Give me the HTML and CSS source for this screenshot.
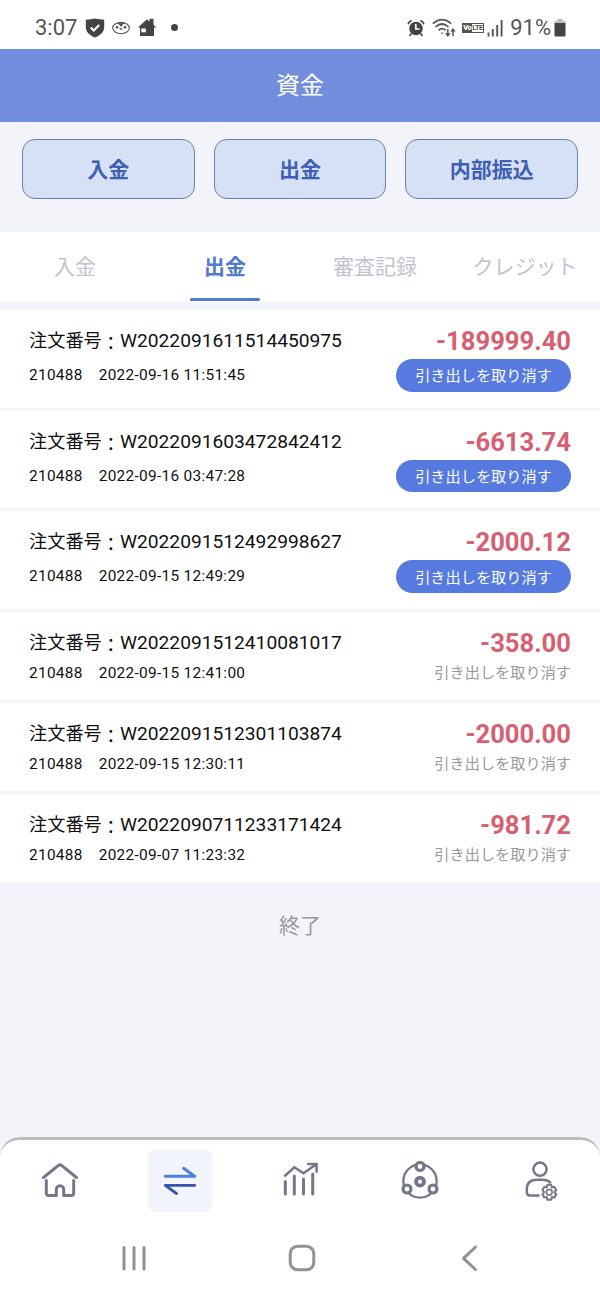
FILE: index.html
```html
<!DOCTYPE html>
<html lang="ja">
<head>
    <meta charset="UTF-8">
    <meta name="viewport" content="width=device-width, initial-scale=1.0">
    <title>資金</title>
    <link rel="stylesheet" href="styles.css">
</head>
<body>
<div class="app">
    <div class="status-bar">
        <div class="status-left">
            <span>3:07</span>
            <svg class="ic-shield" width="20" height="20" viewBox="0 0 20 20"><path d="M10 .5C7 1.2 4 1.6.8 1.7V9c0 5 4 8.500 9.200 10.500C15.200 17.500 19.200 14 19.200 9V1.700C16 1.600 13 1.200 10 .5z" fill="#444"/><path d="M5.800 9.500l3 3L14.200 7" fill="none" stroke="#fff" stroke-width="2.200"/></svg>
            <svg class="ic-face" width="18" height="14" viewBox="0 0 18 14"><ellipse cx="9" cy="7" rx="8.300" ry="5.700" fill="#fff" stroke="#555" stroke-width="1.100"/><path d="M4.500 2.300Q9 .6 13.500 2.300Q11 2.500 9.800 5L9 6 8.200 5Q7 2.500 4.500 2.300z" fill="#555"/><circle cx="5" cy="6.300" r="1.200" fill="#444"/><circle cx="13" cy="6.300" r="1.200" fill="#444"/><path d="M7 7.200h4L9 9.300z" fill="#555"/></svg>
            <svg class="ic-house" width="20" height="19" viewBox="0 0 20 19"><path d="M.8 9.600L10 1.200l2.500 2.200V.7h4v6l2.700 2.900H17V18H3V9.600z" fill="#444"/><path d="M4.300 10.500h4.500v3.800H4.300z" fill="#fff"/></svg>
            <span class="dot"></span>
        </div>
        <div class="status-right">
            <svg width="18" height="18" viewBox="0 0 18 18"><circle cx="9" cy="9.500" r="6.800" fill="#444"/><path d="M1 5.200Q2 2.500 4.700 1.500M17 5.200Q16 2.500 13.300 1.500M4.500 14.500l-2 2.500M13.500 14.500l2 2.500" fill="none" stroke="#444" stroke-width="1.600"/><path d="M8.800 5v5h3.700" fill="none" stroke="#fff" stroke-width="1.700"/></svg>
            <svg class="ic-wifi" width="25" height="20" viewBox="0 0 25 20"><g fill="none" stroke="#555" stroke-width="1.700"><path d="M.8 5.600Q10 -2.500 19.200 5.600M3.500 9Q10 3 16.500 9M6.500 12.300Q10 9 13.500 12.300"/><path d="M15.800 11v6M21 18v-6" stroke-width="1.500"/></g><path d="M8.800 14.500h2.600l-1.300 1.700zM12.900 15.300h5.800l-2.900 3.700zM18.200 13.500h5.600L21 10z" fill="#555"/></svg>
            <span class="volte"><b>Vo</b><span>LTE</span></span>
            <svg class="ic-signal" width="17" height="18" viewBox="0 0 17 18"><path d="M1.500 13.500v4M5.800 10v7.500M10.200 6v11.500M14.600 1v16.500" stroke="#555" stroke-width="1.900"/></svg>
            <span>91%</span>
            <svg class="ic-battery" width="12" height="18" viewBox="0 0 12 18"><path d="M3.500 0h5v2h3v3H.5V2h3z" fill="#bbb"/><path d="M.5 4h11v12.500q0 1-1 1h-9q-1 0-1-1z" fill="#444"/></svg>
        </div>
    </div>

    <h1 class="header">資金</h1>

    <div class="actions">
        <button class="action">入金</button>
        <button class="action">出金</button>
        <button class="action">内部振込</button>
    </div>

    <div class="tabs">
        <div class="tab">入金</div>
        <div class="tab active">出金</div>
        <div class="tab">審査記録</div>
        <div class="tab">クレジット</div>
    </div>

    <div class="list">
        <div class="row pending">
            <div class="info">
                <div class="order"><span class="label">注文番号<span class="colon">：</span></span>W2022091611514450975</div>
                <div class="meta"><span>210488</span><span>2022-09-16 11:51:45</span></div>
            </div>
            <div class="side"><div class="amount">-189999.40</div><button class="cancel">引き出しを取り消す</button></div>
        </div>
        <div class="row pending">
            <div class="info">
                <div class="order"><span class="label">注文番号<span class="colon">：</span></span>W2022091603472842412</div>
                <div class="meta"><span>210488</span><span>2022-09-16 03:47:28</span></div>
            </div>
            <div class="side"><div class="amount">-6613.74</div><button class="cancel">引き出しを取り消す</button></div>
        </div>
        <div class="row pending">
            <div class="info">
                <div class="order"><span class="label">注文番号<span class="colon">：</span></span>W2022091512492998627</div>
                <div class="meta"><span>210488</span><span>2022-09-15 12:49:29</span></div>
            </div>
            <div class="side"><div class="amount">-2000.12</div><button class="cancel">引き出しを取り消す</button></div>
        </div>
        <div class="row">
            <div class="info">
                <div class="order"><span class="label">注文番号<span class="colon">：</span></span>W2022091512410081017</div>
                <div class="meta"><span>210488</span><span>2022-09-15 12:41:00</span></div>
            </div>
            <div class="side"><div class="amount">-358.00</div><div class="cancelled">引き出しを取り消す</div></div>
        </div>
        <div class="row">
            <div class="info">
                <div class="order"><span class="label">注文番号<span class="colon">：</span></span>W2022091512301103874</div>
                <div class="meta"><span>210488</span><span>2022-09-15 12:30:11</span></div>
            </div>
            <div class="side"><div class="amount">-2000.00</div><div class="cancelled">引き出しを取り消す</div></div>
        </div>
        <div class="row">
            <div class="info">
                <div class="order"><span class="label">注文番号<span class="colon">：</span></span>W2022090711233171424</div>
                <div class="meta"><span>210488</span><span>2022-09-07 11:23:32</span></div>
            </div>
            <div class="side"><div class="amount">-981.72</div><div class="cancelled">引き出しを取り消す</div></div>
        </div>
    </div>

    <div class="end">終了</div>

    <div class="bottom">
        <div class="nav">
            <div class="nav-item">
                <svg width="40" height="40" viewBox="0 0 40 40" class="line"><path d="M3.500 16.500L18.500 4.300q1.500-1.200 3 0L36.500 16.500M6.300 19.500v12.500q0 2.500 2.500 2.500h7.500v-6a3.700 3.700 0 0 1 7.400 0v6h7.500q2.500 0 2.500-2.500V19.500" stroke-width="3"/></svg>
            </div>
            <div class="nav-item selected">
                <svg width="40" height="40" viewBox="0 0 40 40" class="line"><path d="M5.300 15.200h29.400L23.600 7.300" stroke="#4d7fe0" stroke-width="2.900"/><path d="M34.700 24.400H5.300L16.500 32.500" stroke="#3a54aa" stroke-width="2.900"/></svg>
            </div>
            <div class="nav-item">
                <svg width="40" height="40" viewBox="0 0 40 40" class="line"><path d="M5.300 20.500v12.500M14.300 15v18M23.500 18v15M32.700 13v20" stroke-width="3"/><path d="M5 14.700l9.300-8.400 9.200 6L36 3.500M28 3.100h8.600v7.600" stroke-width="2.500" stroke-linejoin="miter"/></svg>
            </div>
            <div class="nav-item">
                <svg width="40" height="40" viewBox="0 0 40 40" class="line"><circle cx="20" cy="20" r="16.600" stroke-width="2.300"/><g fill="#fff" stroke-width="3.200"><circle cx="20" cy="5.500" r="4"/><circle cx="7" cy="28" r="4"/><circle cx="33" cy="28" r="4"/><circle cx="20" cy="20.700" r="4" stroke-width="3.800"/></g></svg>
            </div>
            <div class="nav-item">
                <svg width="40" height="42" viewBox="0 0 40 42" class="line"><circle cx="20" cy="9.200" r="6.600" stroke-width="2.500"/><path d="M18.500 35.500H10q-3.200 0-3.200-3.200V29.500Q6.800 19.800 17 19.800h5q5 0 8.200 2.600" stroke-width="2.500"/><path d="M27.400 24.700h3.800l.7 2.800 2.300-.7 2 3.200-1.900 2.200 1.900 2.200-2 3.200-2.300-.7-.7 2.800h-3.800l-.7-2.800-2.300.7-2-3.200 1.900-2.200-1.900-2.200 2-3.200 2.300.7z" stroke-width="2"/><circle cx="29.300" cy="32.200" r="2.800" stroke-width="1.700"/></svg>
            </div>
        </div>
        <div class="system-nav">
            <svg width="28" height="28" viewBox="0 0 28 28"><path d="M4 3.500v21.500M14 3.500v21.500M24 3.500v21.500"/></svg>
            <svg width="28" height="28" viewBox="0 0 28 28"><rect x="2.200" y="2.200" width="23.600" height="23.600" rx="7.500"/></svg>
            <svg width="28" height="28" viewBox="0 0 28 28"><path d="M20.500 3L8.500 14.300 20.500 25.500"/></svg>
        </div>
    </div>
</div>
</body>
</html>
```

FILE: styles.css
```css
* {
    box-sizing: border-box;
}

body {
    margin: 0;
    font-family: Roboto, "Noto Sans CJK JP", sans-serif;
    background: #f3f4f9;
    color: #111;
}

button {
    font-family: inherit;
    padding: 0;
    border: none;
}

svg {
    display: block;
    flex: none;
}

.app {
    display: flex;
    flex-direction: column;
    width: 600px;
    height: 1300px;
}

.status-bar {
    display: flex;
    justify-content: space-between;
    height: 49px;
    padding: 6px 34px 0 35px;
    background: #fff;
    color: #555;
    font-size: 22px;
}

.status-left,
.status-right {
    display: flex;
    align-items: center;
}

.ic-shield { margin-left: 8px; }
.ic-face { margin-left: 7px; }
.ic-house { margin-left: 7px; }

.dot {
    width: 7px;
    height: 7px;
    margin-left: 14px;
    border-radius: 50%;
    background: #444;
}

.ic-wifi { margin-left: 7px; }

.volte {
    display: flex;
    width: 22px;
    height: 10px;
    margin-left: 5px;
    border: 1px solid #555;
    font-size: 7.500px;
    font-weight: 700;
    line-height: 8px;
    letter-spacing: -0.5px;
    white-space: nowrap;
}

.volte b {
    width: 9px;
    background: #555;
    color: #fff;
}

.ic-signal { margin: 0 6px 0 3px; }
.ic-battery { margin-left: 3px; }

.header {
    height: 73px;
    margin: 0;
    padding-top: 1px;
    background: #718ddc;
    color: #fff;
    font-size: 24px;
    font-weight: 400;
    line-height: 73px;
    text-align: center;
}

.actions {
    display: grid;
    grid-template-columns: repeat(3, 1fr);
    gap: 19px;
    height: 110px;
    padding: 17px 22px 33px;
}

.action {
    padding-bottom: 2px;
    border: 1px solid #6880b4;
    border-radius: 13px;
    background: #d7e1f5;
    color: #3f5fb5;
    font-size: 21px;
    font-weight: 700;
}

.tabs {
    display: grid;
    grid-template-columns: repeat(4, 1fr);
    height: 70px;
    margin-bottom: 8px;
    background: #fff;
}

.tab {
    display: flex;
    flex-direction: column;
    align-items: center;
    color: #bfc4d0;
    font-size: 21px;
    line-height: 70px;
    white-space: nowrap;
}

.tab.active {
    color: #5179cd;
    font-weight: 700;
}

.tab.active::after {
    content: "";
    width: 70px;
    height: 3px;
    margin-top: -4px;
    border-radius: 2px;
    background: #5179cd;
}

.list {
    display: flex;
    flex-direction: column;
    gap: 3px;
}

.row {
    display: flex;
    justify-content: space-between;
    height: 88px;
    padding: 18px 29px 0;
    background: #fff;
}

.row.pending {
    height: 97.700px;
}

.order {
    display: flex;
    font-size: 19.200px;
    line-height: 26px;
}

.label {
    font-size: 18.200px;
}

/* the full-width colon sits too high next to the digits */
.colon {
    display: inline-block;
    transform: translateY(3px);
}

.meta {
    display: flex;
    gap: 16px;
    margin-top: 6px;
    font-size: 15.400px;
    letter-spacing: 0.300px;
    line-height: 22px;
}

.row.pending .meta {
    margin-top: 10px;
}

.side {
    display: flex;
    flex-direction: column;
    align-items: flex-end;
}

.amount {
    color: #d75f72;
    font-size: 25.600px;
    font-weight: 700;
    line-height: 27px;
}

.cancel {
    width: 175px;
    height: 32.500px;
    margin-top: 4px;
    padding-bottom: 2px;
    border-radius: 17px;
    background: #567ae0;
    color: #fff;
    font-size: 15.200px;
}

.cancelled {
    margin-top: 5px;
    color: #999;
    font-size: 15.200px;
    line-height: 22px;
}

.end {
    margin-top: 28px;
    color: #999;
    font-size: 21px;
    line-height: 32px;
    text-align: center;
}

.bottom {
    height: 163px;
    margin-top: auto;
    border-top: 3px solid #bcbdc1;
    border-radius: 20px 20px 0 0;
    background: #fff;
}

.nav {
    display: grid;
    grid-template-columns: repeat(5, 1fr);
    justify-items: center;
    padding-top: 9px;
}

.nav-item {
    display: flex;
    align-items: center;
    justify-content: center;
    width: 64px;
    height: 63px;
    border-radius: 8px;
}

.nav-item.selected {
    background: #f1f4fb;
}

.line {
    fill: none;
    stroke: #727889;
    stroke-linecap: round;
    stroke-linejoin: round;
}

.system-nav {
    display: flex;
    justify-content: space-between;
    padding: 32px 117px 0 120px;
}

.system-nav svg {
    fill: none;
    stroke: #929292;
    stroke-width: 3;
    stroke-linecap: round;
    stroke-linejoin: round;
}
```
